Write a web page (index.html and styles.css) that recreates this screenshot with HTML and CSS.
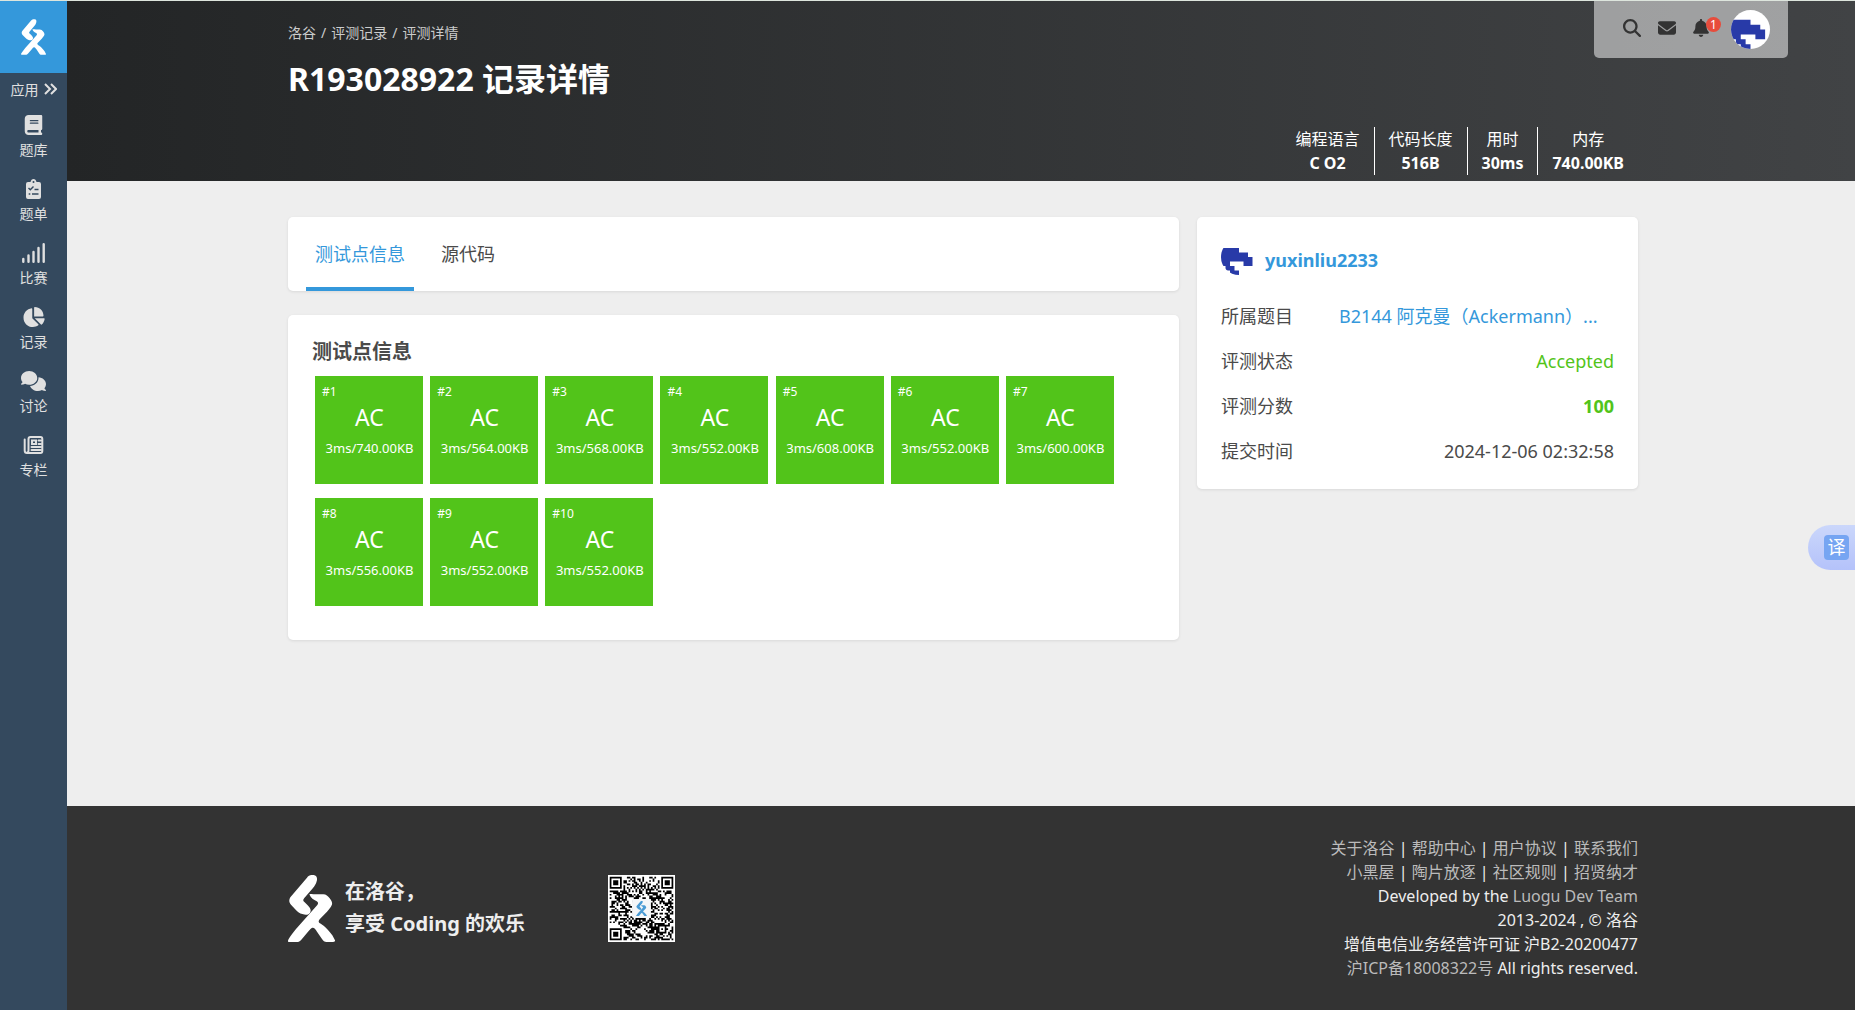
FILE: index.html
```html
<!DOCTYPE html>
<html lang="zh-CN">
<head>
<meta charset="utf-8">
<meta name="viewport" content="width=device-width, initial-scale=1">
<title>R193028922 记录详情 - 洛谷</title>
<link rel="stylesheet" href="styles.css">
</head>
<body>
<svg class="defs" aria-hidden="true">
  <symbol id="logo" viewBox="54 45 141 201">
    <path d="M111 53C116 46 124 44 131 45C140 46 143 54 140 64C138 72 134 78 129 84L103 114C98 120 99 123 104 127L113 136C122 145 124 152 120 158C117 164 108 166 97 162C89 160 83 155 77 149L63 134C57 128 56 120 61 112Z"/>
    <path d="M118 103C124 100 130 103 138 103H160C168 103 174 108 179 115C186 124 188 130 185 136C183 142 177 148 171 155L149 178C144 184 146 187 150 190L161 197C170 204 178 214 187 226L195 241C196 245 192 246 186 246H170C163 246 160 243 156 237L141 215C137 209 133 202 127 203C123 204 120 208 116 213L94 239C90 244 86 246 80 246H58C53 246 53 242 56 237C62 227 70 217 78 207L142 135C146 129 144 126 139 123C132 121 122 114 118 103Z"/>
  </symbol>
  <symbol id="avatar" viewBox="0 0 8 8">
    <path d="M0 2H4V3H6V4H7V6H5V5H2V6H3V7H4V8H2V7H1V6H0Z"/>
  </symbol>
</svg>

<nav class="sidebar">
  <a class="brand" href="#" aria-label="洛谷"><svg><use href="#logo"/></svg></a>
  <a class="apps" href="#">应用
    <svg viewBox="0 0 13 12"><path d="M1 1L6 6L1 11M7 1L12 6L7 11" fill="none" stroke="currentColor" stroke-width="2"/></svg>
  </a>
  <a class="nav-item" href="#">
    <svg viewBox="0 0 448 512"><path d="M96 0C43 0 0 43 0 96V416c0 53 43 96 96 96H384h32c17.700 0 32-14.300 32-32s-14.300-32-32-32V384c17.700 0 32-14.300 32-32V32c0-17.700-14.300-32-32-32H384 96zm0 384H352v64H96c-17.700 0-32-14.300-32-32s14.300-32 32-32zm32-240c0-8.800 7.200-16 16-16H336c8.800 0 16 7.200 16 16s-7.200 16-16 16H144c-8.800 0-16-7.200-16-16zm16 48H336c8.800 0 16 7.200 16 16s-7.200 16-16 16H144c-8.800 0-16-7.200-16-16s7.200-16 16-16z"/></svg>
    题库
  </a>
  <a class="nav-item" href="#">
    <svg viewBox="0 0 15 20"><path fill-rule="evenodd" d="M2 3H4.500C5 1 6 0 7.500 0S10 1 10.500 3H13Q15 3 15 5V18Q15 20 13 20H2Q0 20 0 18V5Q0 3 2 3ZM7.500 2A1 1 0 1 0 7.500 4A1 1 0 1 0 7.500 2Z"/><path d="M2.500 9L4.300 10.800L7.500 7.500M8.500 10.500H12.500M6 15H12.500M2.700 15H4.300" fill="none" stroke="#34495e" stroke-width="1.400"/></svg>
    题单
  </a>
  <a class="nav-item" href="#">
    <svg viewBox="0 0 23 20"><path d="M1.300 16V18.700M6.500 12.500V18.700M11.500 9V18.700M16.500 5V18.700M21.700 1.300V18.700" fill="none" stroke="currentColor" stroke-width="2.400" stroke-linecap="round"/></svg>
    比赛
  </a>
  <a class="nav-item" href="#">
    <svg viewBox="0 0 576 512"><path d="M304 240V16.600c0-9 7-16.600 16-16.600C443.700 0 544 100.300 544 224c0 9-7.600 16-16.600 16H304zM32 272C32 150.700 122.100 50.300 239 34.300c9.200-1.300 17 6.100 17 15.400V288L412.500 444.500c6.700 6.700 6.200 17.700-1.500 23.100C371.800 495.600 323.800 512 272 512C139.500 512 32 404.600 32 272zm526.400 16c9.300 0 16.600 7.800 15.400 17c-7.700 55.900-34.600 105.600-73.900 142.300c-6 5.600-15.400 5.200-21.200-.7L320 288H558.400z"/></svg>
    记录
  </a>
  <a class="nav-item" href="#">
    <svg viewBox="0 0 640 512"><path d="M208 352c114.900 0 208-78.800 208-176S322.900 0 208 0S0 78.800 0 176c0 38.600 14.700 74.300 39.600 103.400c-3.500 9.400-8.700 17.700-14.200 24.700c-4.800 6.200-9.700 11-13.300 14.300c-1.800 1.600-3.300 2.900-4.300 3.700l-1.300 1C1 327.200-1.400 334.400 .8 340.900S9.100 352 16 352c21.800 0 43.800-5.600 62.100-12.500c9.200-3.500 17.800-7.400 25.200-11.400C134.100 343.300 169.800 352 208 352zM448 176c0 112.300-99.100 196.900-216.500 207C255.800 457.400 336.400 512 432 512c38.200 0 73.900-8.700 104.700-23.900c7.500 4 16 7.900 25.200 11.400c18.300 6.900 40.300 12.500 62.100 12.500c6.900 0 13.100-4.500 15.200-11.100c2.100-6.600-.2-13.800-5.800-17.900l-1.300-1c-1-.8-2.500-2-4.300-3.700c-3.600-3.300-8.500-8.100-13.300-14.300c-5.500-7-10.700-15.400-14.200-24.700c24.900-29 39.600-64.700 39.600-103.400c0-92.800-84.900-168.900-192.600-175.500c.4 5.100 .6 10.300 .6 15.500z"/></svg>
    讨论
  </a>
  <a class="nav-item" href="#">
    <svg viewBox="0 0 20 20"><path d="M1.200 4.500V15.500Q1.200 18 3.500 18H17Q18.800 18 18.800 16V4Q18.800 2 17 2H7Q5 2 5 4V15.500Q5 17.500 3 18M8.500 5.500H12.500V9H8.500ZM15 5.500H17M15 9H17M8 12H17M8 15H17" fill="none" stroke="currentColor" stroke-width="2" stroke-linecap="round"/></svg>
    专栏
  </a>
</nav>

<div class="page">
  <header class="header">
    <div class="container header-inner">
      <div>
        <div class="breadcrumb"><a href="#">洛谷</a><span>/</span><a href="#">评测记录</a><span>/</span><a href="#">评测详情</a></div>
        <h1>R193028922 记录详情</h1>
      </div>
      <dl class="stats">
        <div><dt>编程语言</dt><dd>C O2</dd></div>
        <div><dt>代码长度</dt><dd>516B</dd></div>
        <div><dt>用时</dt><dd>30ms</dd></div>
        <div><dt>内存</dt><dd>740.00KB</dd></div>
      </dl>
    </div>
    <div class="user-bar">
      <a href="#" aria-label="搜索"><svg viewBox="0 0 512 512"><path d="M416 208c0 45.900-14.900 88.300-40 122.700L502.600 457.400c12.500 12.500 12.500 32.800 0 45.300s-32.800 12.500-45.300 0L330.700 376c-34.400 25.200-76.800 40-122.700 40C93.100 416 0 322.900 0 208S93.100 0 208 0S416 93.100 416 208zM208 352a144 144 0 1 0 0-288 144 144 0 1 0 0 288z"/></svg></a>
      <a href="#" aria-label="私信"><svg viewBox="0 0 512 512"><path d="M48 64C21.500 64 0 85.500 0 112c0 15.100 7.100 29.300 19.200 38.400L236.800 313.600c11.400 8.500 27 8.500 38.400 0L492.800 150.400c12.100-9.100 19.200-23.300 19.200-38.400c0-26.500-21.500-48-48-48H48zM0 176V384c0 35.300 28.700 64 64 64H448c35.300 0 64-28.700 64-64V176L294.400 339.200c-22.800 17.100-54 17.100-76.800 0L0 176z"/></svg></a>
      <a class="bell" href="#" aria-label="通知"><svg viewBox="0 0 448 512"><path d="M224 0c-17.700 0-32 14.300-32 32V51.200C119 66 64 130.600 64 208v18.800c0 47-17.300 92.400-48.500 127.600l-7.400 8.300c-8.400 9.400-10.400 22.900-5.300 34.400S19.400 416 32 416H416c12.600 0 24-7.400 29.200-18.900s3.100-25-5.300-34.400l-7.400-8.300C401.300 319.200 384 273.900 384 226.800V208c0-77.400-55-142-128-156.800V32c0-17.700-14.300-32-32-32zm45.300 493.300c12-12 18.700-28.300 18.700-45.300H224 160c0 17 6.700 33.300 18.700 45.300s28.300 18.700 45.300 18.700s33.300-6.700 45.300-18.700z"/></svg><span class="badge">1</span></a>
      <a class="avatar" href="#" aria-label="yuxinliu2233"><svg><use href="#avatar"/></svg></a>
    </div>
  </header>

  <main class="container main">
    <div class="column">
      <div class="card tabs">
        <a class="tab active" href="#">测试点信息</a>
        <a class="tab" href="#">源代码</a>
      </div>
      <section class="card results">
        <h2>测试点信息</h2>
        <div class="cases">
          <div class="case"><span class="id">#1</span><span class="status">AC</span><span class="usage">3ms/740.00KB</span></div>
          <div class="case"><span class="id">#2</span><span class="status">AC</span><span class="usage">3ms/564.00KB</span></div>
          <div class="case"><span class="id">#3</span><span class="status">AC</span><span class="usage">3ms/568.00KB</span></div>
          <div class="case"><span class="id">#4</span><span class="status">AC</span><span class="usage">3ms/552.00KB</span></div>
          <div class="case"><span class="id">#5</span><span class="status">AC</span><span class="usage">3ms/608.00KB</span></div>
          <div class="case"><span class="id">#6</span><span class="status">AC</span><span class="usage">3ms/552.00KB</span></div>
          <div class="case"><span class="id">#7</span><span class="status">AC</span><span class="usage">3ms/600.00KB</span></div>
          <div class="case"><span class="id">#8</span><span class="status">AC</span><span class="usage">3ms/556.00KB</span></div>
          <div class="case"><span class="id">#9</span><span class="status">AC</span><span class="usage">3ms/552.00KB</span></div>
          <div class="case"><span class="id">#10</span><span class="status">AC</span><span class="usage">3ms/552.00KB</span></div>
        </div>
      </section>
    </div>
    <aside class="card info">
      <div class="author">
        <a class="avatar" href="#" aria-label="yuxinliu2233"><svg><use href="#avatar"/></svg></a>
        <a class="name" href="#">yuxinliu2233</a>
      </div>
      <dl>
        <div><dt>所属题目</dt><dd class="problem"><a href="#">B2144 阿克曼（Ackermann）...</a></dd></div>
        <div><dt>评测状态</dt><dd class="ok">Accepted</dd></div>
        <div><dt>评测分数</dt><dd class="ok score">100</dd></div>
        <div><dt>提交时间</dt><dd>2024-12-06 02:32:58</dd></div>
      </dl>
    </aside>
  </main>

  <footer class="footer">
    <div class="container footer-inner">
      <div class="slogan">
        <svg><use href="#logo"/></svg>
        <p>在洛谷，<br>享受 Coding 的欢乐</p>
      </div>
      <svg class="qr" viewBox="-1 -1 39 39" role="img" aria-label="二维码">
        <path id="qr-modules"/>
        <rect x="13" y="13" width="11" height="11" rx="1" fill="#f4f6f8"/>
        <svg x="15" y="14" width="7" height="9"><use href="#logo" fill="#4a9bd4"/></svg>
      </svg>
      <div class="links">
        <p><a href="#">关于洛谷</a> | <a href="#">帮助中心</a> | <a href="#">用户协议</a> | <a href="#">联系我们</a></p>
        <p><a href="#">小黑屋</a> | <a href="#">陶片放逐</a> | <a href="#">社区规则</a> | <a href="#">招贤纳才</a></p>
        <p>Developed by the <a href="#">Luogu Dev Team</a></p>
        <p>2013-2024 , © 洛谷</p>
        <p>增值电信业务经营许可证 沪B2-20200477</p>
        <p><a href="#">沪ICP备18008322号</a> All rights reserved.</p>
      </div>
    </div>
  </footer>
</div>
<button class="translate" type="button" aria-label="翻译"><span>译</span></button>
<script src="qr.js"></script>
</body>
</html>
```
FILE: styles.css
```css
* { box-sizing: border-box; }

body {
  margin: 0;
  display: flex;
  min-height: 100vh;
  border-top: 1px solid #dde5dd;
  background: #eee;
  color: #4a4a4a;
  font-family: "Noto Sans", "Noto Sans CJK SC", sans-serif;
  font-size: 16px;
}

h1, h2, p, dl, dd { margin: 0; }
a { color: inherit; text-decoration: none; }
svg { display: block; fill: currentColor; }
.defs { position: absolute; width: 0; height: 0; }

.sidebar {
  flex: none;
  width: 67px;
  background: #34495e;
  color: #e0e0e0;
  font-size: 14px;
}
.brand {
  display: flex;
  align-items: center;
  justify-content: center;
  height: 72px;
  background: #3498db;
  color: #fff;
}
.brand svg { width: 25px; height: 36px; }
.apps {
  display: flex;
  align-items: center;
  justify-content: center;
  gap: 5px;
  height: 32px;
}
.apps svg { width: 13px; height: 12px; }
.nav-item {
  display: flex;
  flex-direction: column;
  align-items: center;
  gap: 5px;
  height: 64px;
  padding-top: 10px;
  line-height: 20px;
}
.nav-item svg { width: 25px; height: 20px; }

.page {
  flex: 1;
  min-width: 0;
  display: flex;
  flex-direction: column;
}
.container {
  width: 100%;
  max-width: 1354px;
  margin: 0 auto;
  padding-left: 4px;
}

.header {
  position: relative;
  background: linear-gradient(to right, #232526, #414345);
  color: #fff;
}
.header-inner {
  display: flex;
  flex-direction: column;
  justify-content: space-between;
  min-height: 180px;
  padding-top: 22px;
  padding-bottom: 6px;
}
.breadcrumb {
  font-size: 14px;
  line-height: 20px;
  color: #ccc;
}
.breadcrumb span { margin: 0 5px; }
h1 {
  margin-top: 12px;
  font-size: 32px;
  line-height: 48px;
}
.stats {
  display: flex;
  align-self: flex-end;
  text-align: center;
  line-height: 24px;
}
.stats div { padding: 0 14px; }
.stats div + div { border-left: 1px solid #fff; }
.stats dd { font-weight: bold; }

.user-bar {
  position: absolute;
  top: 0;
  right: 67px;
  display: flex;
  align-items: center;
  gap: 17px;
  height: 57px;
  padding: 0 18px 0 29px;
  border-radius: 0 0 5px 5px;
  background: rgba(255, 255, 255, .5);
  color: #333;
}
.user-bar a { margin-bottom: 3px; }
.user-bar svg { height: 18px; width: 18px; }
.user-bar .bell { position: relative; margin-right: 5px; }
.user-bar .bell svg { width: 16px; }
.badge {
  position: absolute;
  top: -2px;
  left: 13px;
  width: 15px;
  height: 15px;
  border-radius: 50%;
  background: #e74c3c;
  color: #fff;
  font-size: 12px;
  line-height: 15px;
  text-align: center;
}
.avatar {
  width: 36px;
  height: 36px;
  border-radius: 50%;
  overflow: hidden;
  background: #fff;
  color: #283aa8;
}
.user-bar .avatar { width: 39px; height: 39px; margin-bottom: 0; }
.avatar svg, .user-bar .avatar svg { width: 100%; height: 100%; }

.main {
  flex: 1;
  display: grid;
  grid-template-columns: 1fr 441px;
  align-items: start;
  gap: 18px;
  padding-top: 36px;
  padding-bottom: 36px;
}
.column { display: grid; gap: 24px; }
.card {
  border-radius: 5px;
  background: #fff;
  box-shadow: 0 1px 3px rgba(26, 26, 26, .1);
}
.tabs {
  display: flex;
  gap: 18px;
  padding: 0 18px;
  font-size: 18px;
}
.tab {
  padding: 4px 9px 0;
  border-bottom: 4px solid transparent;
  line-height: 66px;
}
.tab.active { border-color: #3498db; color: #3498db; }

.results { padding: 24px 24px 34px; }
h2 {
  font-size: 20px;
  line-height: 26px;
}
.cases {
  display: grid;
  grid-template-columns: repeat(auto-fill, 108px);
  justify-content: space-between;
  row-gap: 14px;
  max-width: 799px;
  margin: 11px 3px 0;
}
.case {
  display: flex;
  flex-direction: column;
  height: 108px;
  padding: 6px 0 0 1px;
  background: #52c41a;
  color: #fff;
  text-align: center;
}
.id { padding-left: 6px; font-size: 12px; line-height: 20px; text-align: left; }
.status { font-size: 23px; line-height: 30px; }
.usage { font-size: 13px; line-height: 32px; }

.info { padding: 22px 24px 15px; font-size: 18px; }
.author { display: flex; align-items: center; gap: 8px; margin-bottom: 19px; }
.name { padding-top: 5px; color: #3498db; font-weight: bold; }
.info dl div {
  display: flex;
  justify-content: space-between;
  line-height: 45px;
}
.problem {
  width: 275px;
  color: #3498db;
  white-space: nowrap;
}
.ok { color: #52c41a; }
.score { font-weight: bold; }

.footer {
  padding: 30px 0;
  background: #333;
  color: #eee;
}
.footer-inner { display: flex; align-items: center; }
.slogan {
  display: flex;
  align-items: center;
  gap: 10px;
  font-size: 20px;
  font-weight: bold;
  line-height: 32px;
}
.slogan svg { width: 47px; height: 67px; color: #fff; }
.qr {
  width: 67px;
  height: 67px;
  margin-left: 83px;
  background: #fff;
  color: #000;
}
.links {
  margin-left: auto;
  text-align: right;
  line-height: 24px;
}
.links a { color: #bbb; }

.translate {
  position: fixed;
  top: 525px;
  right: 0;
  display: flex;
  align-items: center;
  width: 47px;
  height: 45px;
  padding: 0 0 0 16px;
  border: 0;
  border-radius: 23px 0 0 23px;
  background: linear-gradient(#cbd7fb, #b4c2fa);
  font-family: inherit;
}
.translate span {
  width: 25px;
  height: 25px;
  border-radius: 4px;
  background: #76a5f2;
  color: #fff;
  font-size: 18px;
  line-height: 25px;
  text-align: center;
}
```
FILE: qr.js
```javascript
// Builds the module path of the footer's 37x37 code.
const SIZE = 37;
const finders = [[0, 0], [SIZE - 7, 0], [0, SIZE - 7]];
let seed = 193028922;

function nextBit() {
  seed = (Math.imul(seed, 1664525) + 1013904223) >>> 0;
  return seed >>> 31;
}

function isDark(x, y) {
  const bit = nextBit();
  for (const [fx, fy] of finders) {
    const distance = Math.max(Math.abs(x - fx - 3), Math.abs(y - fy - 3));
    if (distance <= 4) return distance === 3 || distance <= 1;
  }
  const alignment = Math.max(Math.abs(x - 30), Math.abs(y - 30));
  if (alignment <= 2) return alignment !== 1;
  if (x === 6 || y === 6) return (x + y) % 2 === 0;
  return bit === 1;
}

let d = "";
for (let y = 0; y < SIZE; y++) {
  for (let x = 0; x < SIZE; x++) {
    if (isDark(x, y)) d += `M${x} ${y}h1v1h-1z`;
  }
}
document.getElementById("qr-modules").setAttribute("d", d);
```
